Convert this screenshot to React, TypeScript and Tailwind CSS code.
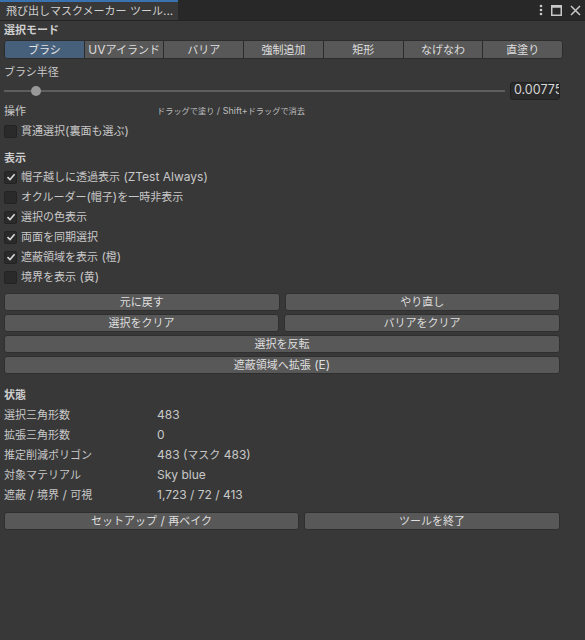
import type { ReactNode } from "react"

const font = { fontFamily: '"Inter", "Noto Sans CJK JP", sans-serif' }

const modes = ["ブラシ", "UVアイランド", "バリア", "強制追加", "矩形", "なげなわ", "直塗り"]

const displayOptions = [
  { label: "帽子越しに透過表示 (ZTest Always)", checked: true },
  { label: "オクルーダー(帽子)を一時非表示", checked: false },
  { label: "選択の色表示", checked: true },
  { label: "両面を同期選択", checked: true },
  { label: "遮蔽領域を表示 (橙)", checked: true },
  { label: "境界を表示 (黄)", checked: false },
]

const stats = [
  ["選択三角形数", "483"],
  ["拡張三角形数", "0"],
  ["推定削減ポリゴン", "483 (マスク 483)"],
  ["対象マテリアル", "Sky blue"],
  ["遮蔽 / 境界 / 可視", "1,723 / 72 / 413"],
]

// Japanese glyphs render a bit narrower than the latin ones in the editor font
const cjk = /([\u3000-\u30ff\u4e00-\u9fff\uff00-\uffef]+)/

function T({ text, small = "text-[11px]" }: { text: string; small?: string }) {
  return (
    <span className="whitespace-pre">
      {text.split(cjk).map((part, i) =>
        i % 2 === 1 ? (
          <span key={i} className={small}>
            {part}
          </span>
        ) : (
          part
        )
      )}
    </span>
  )
}

function Checkbox({ checked }: { checked: boolean }) {
  return (
    <div className="w-[13px] h-[13px] rounded-[2px] bg-[#2a2a2a] border border-[#232323] flex items-center justify-center shrink-0">
      {checked && (
        <svg width="10" height="10" viewBox="0 0 10 10">
          <path d="M1.5 5.2 L4 7.6 L8.6 2.2" fill="none" stroke="#d8d8d8" strokeWidth="1.6" />
        </svg>
      )}
    </div>
  )
}

function Button({ children, className = "" }: { children: ReactNode; className?: string }) {
  return (
    <div
      className={`h-[18px] flex items-center justify-center rounded-[3px] bg-[#585858] border border-[#2f2f2f] text-[12px] text-[#dedede] whitespace-nowrap ${className}`}
    >
      {children}
    </div>
  )
}

export default function App() {
  return (
    <div className="w-[585px] h-[640px] bg-[#383838] text-[#c8c8c8] text-[12px] flex flex-col overflow-hidden" style={font}>
      {/* Tab bar */}
      <div className="h-[21px] bg-[#282828] flex items-stretch border-b border-[#232323] shrink-0">
        <div className="w-[178px] bg-[#383838] border-t-2 border-[#3a72b0] flex items-center pl-[6px] text-[12px] text-[#d2d2d2] whitespace-nowrap overflow-hidden">
          <T text="飛び出しマスクメーカー ツール..." />
        </div>
        <div className="flex-1" />
        <div className="flex items-center gap-[8px] pr-[4px]">
          <svg width="4" height="12" viewBox="0 0 4 12">
            <circle cx="2" cy="2" r="1.3" fill="#c8c8c8" />
            <circle cx="2" cy="6" r="1.3" fill="#c8c8c8" />
            <circle cx="2" cy="10" r="1.3" fill="#c8c8c8" />
          </svg>
          <svg width="11" height="11" viewBox="0 0 11 11">
            <rect x="0.75" y="0.75" width="9.5" height="9.5" fill="none" stroke="#c8c8c8" strokeWidth="1.5" />
            <rect x="0.75" y="0.75" width="9.5" height="2" fill="#c8c8c8" />
          </svg>
          <svg width="11" height="11" viewBox="0 0 11 11">
            <path d="M1 1 L10 10 M10 1 L1 10" stroke="#c8c8c8" strokeWidth="1.5" />
          </svg>
        </div>
      </div>

      {/* Content */}
      <div className="w-[563px] pl-[4px] flex flex-col">
        <div className="h-[18px] flex items-center font-bold text-[#cfcfcf]">
          <T text="選択モード" />
        </div>

        <div className="mt-[1px] h-[19px] flex">
          {modes.map((m, i) => (
            <div
              key={m}
              className={`flex-1 flex items-center justify-center border border-[#2c2c2c] text-[12px] ${
                i === 0 ? "bg-[#46607c] text-[#e4e4e4] rounded-l-[3px]" : "bg-[#585858] text-[#dedede]"
              } ${i === modes.length - 1 ? "rounded-r-[3px]" : ""} ${i > 0 ? "-ml-px" : ""}`}
            >
              <T text={m} />
            </div>
          ))}
        </div>

        <div className="mt-[3px] h-[19px] flex items-center">
          <T text="ブラシ半径" />
        </div>

        <div className="h-[19px] flex items-center pr-[3px]">
          <div className="flex-1 relative h-[12px] flex items-center">
            <div className="w-full h-[2px] bg-[#5e5e5e]" />
            <div className="absolute left-[27px] w-[10px] h-[10px] rounded-full bg-[#999999]" />
          </div>
          <div className="ml-[5px] w-[50px] h-[18px] bg-[#2a2a2a] border border-[#212121] rounded-[3px] flex items-center pl-[3px] overflow-hidden whitespace-nowrap text-[12.5px] text-[#d6d6d6]">
            0.00775
          </div>
        </div>

        <div className="mt-[1px] h-[20px] flex items-center">
          <div className="w-[153px]">
            <T text="操作" />
          </div>
          <div className="text-[9px] text-[#bdbdbd]">
            <T text="ドラッグで塗り / Shift+ドラッグで消去" small="text-[8.2px]" />
          </div>
        </div>

        <div className="h-[20px] flex items-center gap-[4px]">
          <Checkbox checked={false} />
          <T text="貫通選択(裏面も選ぶ)" />
        </div>

        <div className="mt-[8px] h-[18px] flex items-center font-bold text-[#cfcfcf]">
          <T text="表示" />
        </div>

        {displayOptions.map((o) => (
          <div key={o.label} className="h-[20px] flex items-center gap-[4px]">
            <Checkbox checked={o.checked} />
            <T text={o.label} />
          </div>
        ))}

        <div className="mt-[6px] flex flex-col gap-[3px] pr-[3px]">
          <div className="flex gap-[5px]">
            <Button className="flex-1">
              <T text="元に戻す" />
            </Button>
            <Button className="flex-1">
              <T text="やり直し" />
            </Button>
          </div>
          <div className="flex gap-[5px]">
            <Button className="w-[275px]">
              <T text="選択をクリア" />
            </Button>
            <Button className="flex-1">
              <T text="バリアをクリア" />
            </Button>
          </div>
          <Button>
            <T text="選択を反転" />
          </Button>
          <Button>
            <T text="遮蔽領域へ拡張 (E)" />
          </Button>
        </div>

        <div className="mt-[11px] h-[20px] flex items-center font-bold text-[#cfcfcf]">
          <T text="状態" />
        </div>

        {stats.map(([k, v]) => (
          <div key={k} className="h-[20px] flex items-center">
            <div className="w-[153px]">
              <T text={k} />
            </div>
            <div>
              <T text={v} />
            </div>
          </div>
        ))}

        <div className="mt-[7px] flex gap-[5px] pr-[3px]">
          <Button className="w-[295px]">
            <T text="セットアップ / 再ベイク" />
          </Button>
          <Button className="flex-1">
            <T text="ツールを終了" />
          </Button>
        </div>
      </div>
    </div>
  )
}
